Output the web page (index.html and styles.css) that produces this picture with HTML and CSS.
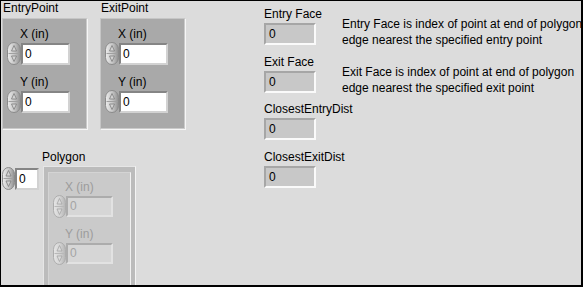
FILE: index.html
```html
<!DOCTYPE html>
<html>
<head>
<meta charset="utf-8">
<link rel="stylesheet" href="styles.css">
</head>
<body>
<svg class="defs" width="0" height="0" aria-hidden="true">
  <defs>
    <linearGradient id="sg" x1="0" y1="0" x2="1" y2="0">
      <stop offset="0" stop-color="#ececec"/>
      <stop offset="0.55" stop-color="#c4c4c4"/>
      <stop offset="1" stop-color="#8e8e8e"/>
    </linearGradient>
    <linearGradient id="sgd" x1="0" y1="0" x2="1" y2="0">
      <stop offset="0" stop-color="#e6e6e6"/>
      <stop offset="0.55" stop-color="#d2d2d2"/>
      <stop offset="1" stop-color="#b4b4b4"/>
    </linearGradient>
  </defs>
</svg>
<div class="frame">
  <div class="left">
    <div class="top-row">
      <div class="group">
        <div class="lbl">EntryPoint</div>
        <div class="cluster">
          <div class="clbl">X (in)</div>
          <div class="num">
            <svg class="spin" width="14" height="23" viewBox="0 0 14 23"><rect x="0.5" y="0.5" width="13" height="22" rx="6.5" ry="7" fill="url(#sg)" stroke="#8a8a8a"/><line x1="1.5" y1="11.5" x2="12.5" y2="11.5" stroke="#a0a0a0"/><path d="M7 3.5 L9.5 9 L4.5 9 Z" fill="#d4d4d4" stroke="#7c7c7c" stroke-width="0.8"/><path d="M7 19.5 L9.5 14 L4.5 14 Z" fill="#d4d4d4" stroke="#7c7c7c" stroke-width="0.8"/></svg>
            <div class="field">0</div>
          </div>
          <div class="clbl second">Y (in)</div>
          <div class="num">
            <svg class="spin" width="14" height="23" viewBox="0 0 14 23"><rect x="0.5" y="0.5" width="13" height="22" rx="6.5" ry="7" fill="url(#sg)" stroke="#8a8a8a"/><line x1="1.5" y1="11.5" x2="12.5" y2="11.5" stroke="#a0a0a0"/><path d="M7 3.5 L9.5 9 L4.5 9 Z" fill="#d4d4d4" stroke="#7c7c7c" stroke-width="0.8"/><path d="M7 19.5 L9.5 14 L4.5 14 Z" fill="#d4d4d4" stroke="#7c7c7c" stroke-width="0.8"/></svg>
            <div class="field">0</div>
          </div>
        </div>
      </div>
      <div class="group">
        <div class="lbl">ExitPoint</div>
        <div class="cluster">
          <div class="clbl">X (in)</div>
          <div class="num">
            <svg class="spin" width="14" height="23" viewBox="0 0 14 23"><rect x="0.5" y="0.5" width="13" height="22" rx="6.5" ry="7" fill="url(#sg)" stroke="#8a8a8a"/><line x1="1.5" y1="11.5" x2="12.5" y2="11.5" stroke="#a0a0a0"/><path d="M7 3.5 L9.5 9 L4.5 9 Z" fill="#d4d4d4" stroke="#7c7c7c" stroke-width="0.8"/><path d="M7 19.5 L9.5 14 L4.5 14 Z" fill="#d4d4d4" stroke="#7c7c7c" stroke-width="0.8"/></svg>
            <div class="field">0</div>
          </div>
          <div class="clbl second">Y (in)</div>
          <div class="num">
            <svg class="spin" width="14" height="23" viewBox="0 0 14 23"><rect x="0.5" y="0.5" width="13" height="22" rx="6.5" ry="7" fill="url(#sg)" stroke="#8a8a8a"/><line x1="1.5" y1="11.5" x2="12.5" y2="11.5" stroke="#a0a0a0"/><path d="M7 3.5 L9.5 9 L4.5 9 Z" fill="#d4d4d4" stroke="#7c7c7c" stroke-width="0.8"/><path d="M7 19.5 L9.5 14 L4.5 14 Z" fill="#d4d4d4" stroke="#7c7c7c" stroke-width="0.8"/></svg>
            <div class="field">0</div>
          </div>
        </div>
      </div>
    </div>

    <div class="poly">
      <div class="lbl poly-lbl">Polygon</div>
      <div class="poly-row">
        <div class="num index">
          <svg class="spin" width="13" height="23" viewBox="0 0 13 23"><rect x="0.5" y="0.5" width="12" height="22" rx="6" ry="7" fill="url(#sg)" stroke="#8a8a8a"/><line x1="1.5" y1="11.5" x2="11.5" y2="11.5" stroke="#a0a0a0"/><path d="M6.5 3.5 L9 9 L4 9 Z" fill="#d4d4d4" stroke="#7c7c7c" stroke-width="0.8"/><path d="M6.5 19.5 L9 14 L4 14 Z" fill="#d4d4d4" stroke="#7c7c7c" stroke-width="0.8"/></svg>
          <div class="field idx">0</div>
        </div>
        <div class="array">
          <div class="dcluster">
            <div class="clbl">X (in)</div>
            <div class="num">
              <svg class="spin" width="13" height="23" viewBox="0 0 13 23"><rect x="0.5" y="0.5" width="12" height="22" rx="6" ry="7" fill="url(#sgd)" stroke="#acacac"/><line x1="1.5" y1="11.5" x2="11.5" y2="11.5" stroke="#b8b8b8"/><path d="M6.5 3.5 L9 9 L4 9 Z" fill="#dcdcdc" stroke="#a4a4a4" stroke-width="0.8"/><path d="M6.5 19.5 L9 14 L4 14 Z" fill="#dcdcdc" stroke="#a4a4a4" stroke-width="0.8"/></svg>
              <div class="field dis">0</div>
            </div>
            <div class="clbl second">Y (in)</div>
            <div class="num">
              <svg class="spin" width="13" height="23" viewBox="0 0 13 23"><rect x="0.5" y="0.5" width="12" height="22" rx="6" ry="7" fill="url(#sgd)" stroke="#acacac"/><line x1="1.5" y1="11.5" x2="11.5" y2="11.5" stroke="#b8b8b8"/><path d="M6.5 3.5 L9 9 L4 9 Z" fill="#dcdcdc" stroke="#a4a4a4" stroke-width="0.8"/><path d="M6.5 19.5 L9 14 L4 14 Z" fill="#dcdcdc" stroke="#a4a4a4" stroke-width="0.8"/></svg>
              <div class="field dis">0</div>
            </div>
          </div>
        </div>
      </div>
    </div>
  </div>

  <div class="right">
    <div class="irow">
      <div class="ind"><div class="lbl">Entry Face</div><div class="box">0</div></div>
      <div class="desc">Entry Face is index of point at end of polygon<br>edge nearest the specified entry point</div>
    </div>
    <div class="irow r2">
      <div class="ind"><div class="lbl">Exit Face</div><div class="box">0</div></div>
      <div class="desc">Exit Face is index of point at end of polygon<br>edge nearest the specified exit point</div>
    </div>
    <div class="irow">
      <div class="ind"><div class="lbl">ClosestEntryDist</div><div class="box">0</div></div>
    </div>
    <div class="irow">
      <div class="ind"><div class="lbl">ClosestExitDist</div><div class="box">0</div></div>
    </div>
  </div>
</div>
</body>
</html>
```

FILE: styles.css
```css
* { box-sizing: border-box; }
body { margin: 0; }
.defs { position: absolute; width: 0; height: 0; overflow: hidden; }

.frame {
  width: 583px;
  height: 287px;
  border-style: solid;
  border-color: #000;
  border-width: 1px 2px 2px 1px;
  background: #dcdcdc;
  display: flex;
  overflow: hidden;
  font-family: "Liberation Sans", Arial, sans-serif;
  font-size: 12px;
  line-height: 14px;
  color: #000;
}

.left { width: 262px; flex: none; }

.top-row { display: flex; gap: 13px; padding-left: 1px; }
.group { width: 85px; }
.lbl { height: 14px; padding-left: 1px; white-space: nowrap; }

.cluster {
  margin-top: 3px;
  height: 111px;
  background: #a9a9a9;
  border: 1px solid;
  border-color: #c6c6c6 #cacaca #cacaca #c6c6c6;
  box-shadow: 1px 1px 0 #f6f6f6;
}

.clbl { margin-top: 8px; padding-left: 17px; height: 14px; white-space: nowrap; }
.clbl.second { margin-top: 10px; }

.num { display: flex; align-items: flex-start; margin-top: 1px; padding-left: 4px; }
.spin { display: block; flex: none; }

.field {
  width: 49px;
  height: 22px;
  margin-top: 1px;
  background: #fff;
  border: 2px solid;
  border-color: #858585 #d2d2d2 #d2d2d2 #858585;
  padding-left: 2px;
  line-height: 18px;
}

.poly { margin-top: 21px; }
.poly-lbl { padding-left: 41px; }
.poly-row { display: flex; align-items: flex-start; margin-top: 2px; padding-left: 1px; }

.num.index { padding-left: 0; margin-top: 1px; }
.field.idx { width: 24px; margin-top: 1px; }

.array {
  margin-left: 4px;
  width: 93px;
  height: 130px;
  background: #bcbcbc;
  border: 1px solid;
  border-color: #e6e6e6 #f4f4f4 #f4f4f4 #e6e6e6;
  padding: 5px 4px 0 4px;
}

.dcluster {
  height: 130px;
  background: #cacaca;
  border: 1px solid;
  border-color: #d4d4d4 #f2f2f2 #f2f2f2 #d4d4d4;
}
.dcluster .clbl { margin-top: 7px; padding-left: 16px; color: #9c9c9c; }
.dcluster .clbl.second { margin-top: 9px; }
.dcluster .num { padding-left: 4px; }
.field.dis {
  width: 47px;
  height: 21px;
  background: #d6d6d6;
  border-color: #acacac #e2e2e2 #e2e2e2 #acacac;
  color: #a4a4a4;
  line-height: 17px;
}

.right { flex: 1; padding-top: 6px; }
.irow { display: flex; height: 48px; }
.irow.r2 { height: 47px; }
.ind { width: 79px; flex: none; }
.box {
  margin: 2px 0 0 1px;
  width: 52px;
  height: 22px;
  background: #c8c8c8;
  border: 2px solid;
  border-color: #a6a6a6 #fafafa #fafafa #a6a6a6;
  padding-left: 3px;
  line-height: 18px;
}
.desc { margin-top: 9px; line-height: 16px; white-space: nowrap; }
```
